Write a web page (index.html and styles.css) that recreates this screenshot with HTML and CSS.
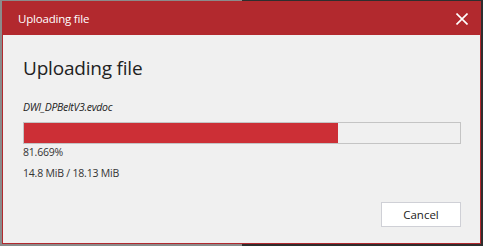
FILE: index.html
```html
<!DOCTYPE html>
<html lang="en">
<head>
    <meta charset="UTF-8">
    <meta name="viewport" content="width=device-width, initial-scale=1.0">
    <title>Uploading file</title>
    <link rel="stylesheet" href="styles.css">
</head>
<body>

<div class="dialog">
    <div class="dialog-header">
        <span class="dialog-title">Uploading file</span>
        <button class="close-btn" aria-label="Close">
            <svg width="12" height="12" viewBox="0 0 12 12">
                <path d="M0.5 0.5 L11.5 11.5 M11.5 0.5 L0.5 11.5" stroke="#fff" stroke-width="1.6" fill="none"/>
            </svg>
        </button>
    </div>

    <div class="dialog-body">
        <h2>Uploading file</h2>
        <div class="file-name">DWI_DPBeltV3.evdoc</div>
        <div class="progress">
            <div class="progress-fill" style="width: 72%"></div>
        </div>
        <div class="stat">81.669%</div>
        <div class="stat">14.8 MiB / 18.13 MiB</div>
        <div class="actions">
            <button class="cancel-btn">Cancel</button>
        </div>
    </div>
</div>

</body>
</html>
```

FILE: styles.css
```css
body {
    font-family: "Open Sans", "Noto Sans", sans-serif;
    margin: 0;
    padding: 1px 2px 2px 2px;
    height: 246px;
    box-sizing: border-box;
    background: linear-gradient(to right, #8b8b8b 242px, #2e2e2e 242px);
}
.dialog {
    height: 243px;
    box-sizing: border-box;
    border: 1px solid #b2292e;
    border-top: none;
    background-color: #f0f0f0;
    display: flex;
    flex-direction: column;
}
.dialog-header {
    height: 34px;
    flex-shrink: 0;
    margin: 0 -1px;
    background-color: #b2292e;
    display: flex;
    align-items: center;
    justify-content: space-between;
    padding: 0 12px 0 16px;
}
.dialog-title {
    color: #fff;
    font-size: 11.5px;
    letter-spacing: -0.2px;
    padding-top: 1px;
}
.close-btn {
    background: none;
    border: none;
    padding: 0;
    width: 12px;
    height: 12px;
    display: flex;
    margin-top: 2px;
    margin-right: 1px;
}
.dialog-body {
    flex: 1;
    padding: 20px 19px 0 20px;
    display: flex;
    flex-direction: column;
}
.dialog-body h2 {
    margin: 0;
    font-weight: normal;
    font-size: 19px;
    letter-spacing: -0.2px;
    color: #222;
    line-height: 26px;
}
.file-name {
    margin-top: 19px;
    font-size: 10.5px;
    font-style: italic;
    color: #222;
    letter-spacing: -0.3px;
    line-height: 14px;
}
.progress {
    margin-top: 8px;
    height: 22px;
    box-sizing: border-box;
    border: 1px solid #c4c4c4;
    background-color: #f0f0f0;
}
.progress-fill {
    height: 100%;
    background-color: #cc2f36;
}
.stat {
    font-size: 10.5px;
    color: #333;
    letter-spacing: -0.2px;
    line-height: 15px;
    margin-top: 1px;
}
.stat + .stat {
    margin-top: 6px;
}
.actions {
    display: flex;
    justify-content: flex-end;
    margin-top: 21px;
}
.cancel-btn {
    width: 80px;
    height: 25px;
    background-color: #fff;
    border: 1px solid #cfd0d6;
    font-family: "Open Sans", "Noto Sans", sans-serif;
    font-size: 11.5px;
    color: #222;
    padding: 0;
}
```
